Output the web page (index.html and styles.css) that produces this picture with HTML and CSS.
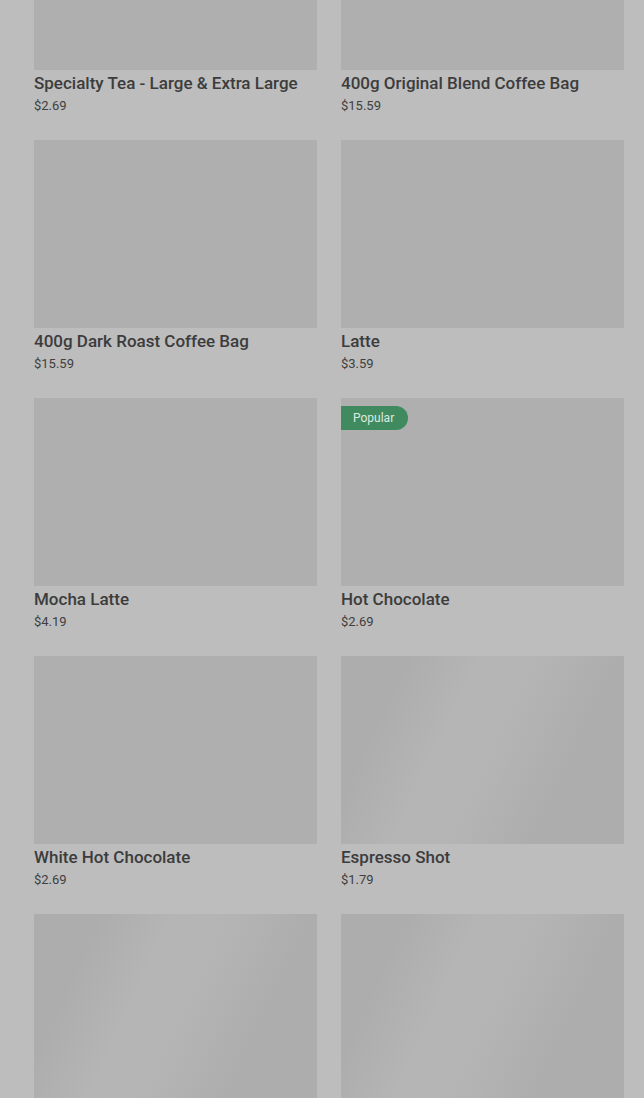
FILE: index.html
```html
<!DOCTYPE html>
<html lang="en">
<head>
    <meta charset="UTF-8">
    <meta name="viewport" content="width=device-width, initial-scale=1.0">
    <title>Menu</title>
    <link rel="stylesheet" href="styles.css">
</head>
<body>
    <div class="menu-grid">
        <div class="item">
            <div class="thumb"></div>
            <h3>Specialty Tea - Large &amp; Extra Large</h3>
            <p class="price">$2.69</p>
        </div>
        <div class="item">
            <div class="thumb"></div>
            <h3>400g Original Blend Coffee Bag</h3>
            <p class="price">$15.59</p>
        </div>
        <div class="item">
            <div class="thumb"></div>
            <h3>400g Dark Roast Coffee Bag</h3>
            <p class="price">$15.59</p>
        </div>
        <div class="item">
            <div class="thumb"></div>
            <h3>Latte</h3>
            <p class="price">$3.59</p>
        </div>
        <div class="item">
            <div class="thumb"></div>
            <h3>Mocha Latte</h3>
            <p class="price">$4.19</p>
        </div>
        <div class="item">
            <div class="thumb">
                <span class="badge">Popular</span>
            </div>
            <h3>Hot Chocolate</h3>
            <p class="price">$2.69</p>
        </div>
        <div class="item">
            <div class="thumb"></div>
            <h3>White Hot Chocolate</h3>
            <p class="price">$2.69</p>
        </div>
        <div class="item">
            <div class="thumb loading"></div>
            <h3>Espresso Shot</h3>
            <p class="price">$1.79</p>
        </div>
        <div class="item">
            <div class="thumb loading"></div>
            <h3>&nbsp;</h3>
            <p class="price">&nbsp;</p>
        </div>
        <div class="item">
            <div class="thumb loading"></div>
            <h3>&nbsp;</h3>
            <p class="price">&nbsp;</p>
        </div>
    </div>
</body>
</html>
```

FILE: styles.css
```css
body {
    margin: 0;
    padding: 0;
    background-color: #bdbdbd;
    font-family: Roboto, "Liberation Sans", sans-serif;
    overflow: hidden;
}

.menu-grid {
    display: grid;
    grid-template-columns: 283px 283px;
    column-gap: 24px;
    padding: 0 20px 0 34px;
    margin-top: -118px;
}

.item {
    margin-bottom: 25px;
}

.thumb {
    position: relative;
    height: 188px;
    background-color: #afafaf;
}

.thumb.loading {
    background: linear-gradient(115deg, #adadad 0%, #adadad 18%, #b5b5b5 38%, #b4b4b4 55%, #adadad 75%, #adadad 100%);
}

.badge {
    position: absolute;
    top: 8px;
    left: 0;
    height: 24px;
    line-height: 24px;
    padding: 0 14px 0 12px;
    background-color: #3f8a5f;
    color: #dcebe2;
    font-size: 12px;
    border-radius: 0 12px 12px 0;
}

.item h3 {
    margin: 2px 0 0;
    font-size: 17px;
    line-height: 22px;
    font-weight: 500;
    color: #3c3c3c;
}

.price {
    margin: 3px 0 0;
    font-size: 13px;
    line-height: 18px;
    color: #404040;
}
```
